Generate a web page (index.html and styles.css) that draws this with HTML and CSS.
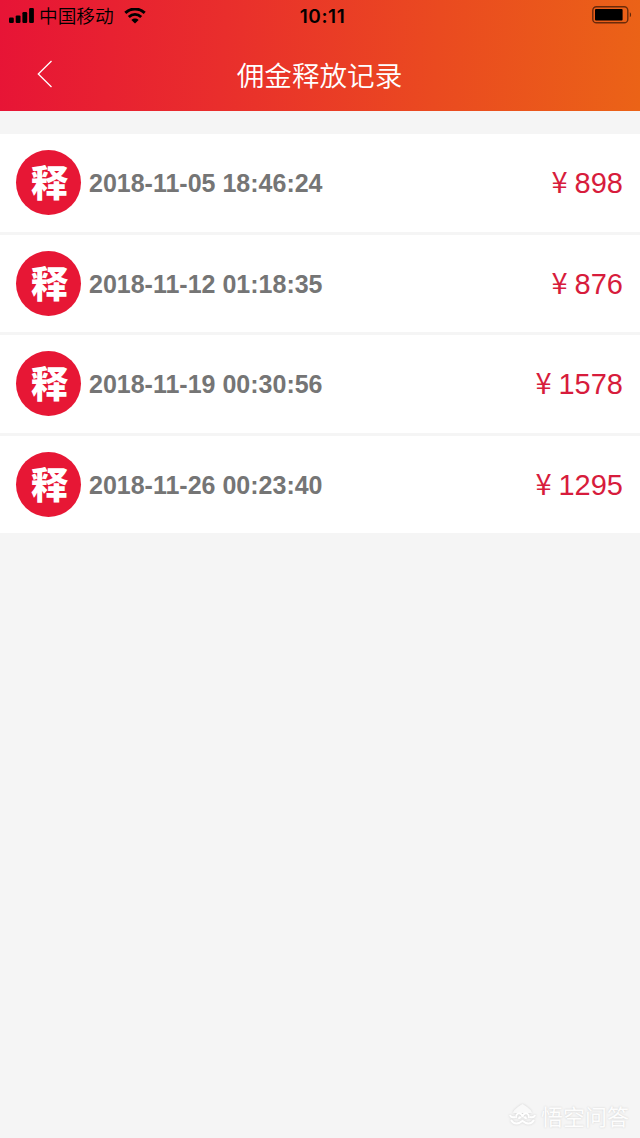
FILE: index.html
```
<!DOCTYPE html>
<html lang="zh-CN">
<head>
    <meta charset="UTF-8">
    <meta name="viewport" content="width=device-width, initial-scale=1.0">
    <title>佣金释放记录</title>
    <link rel="stylesheet" href="styles.css">
</head>
<body>
    <!-- Header -->
    <header class="header">
        <div class="status-bar">
            <div class="status-left">
                <svg class="signal" width="25" height="16" viewBox="0 0 25 16">
                    <rect x="0" y="9.6" width="4.8" height="5.4" rx="1.2"/>
                    <rect x="6.7" y="7.4" width="4.8" height="7.6" rx="1.2"/>
                    <rect x="13.4" y="4" width="4.8" height="11" rx="1.2"/>
                    <rect x="20.1" y="0" width="4.8" height="15" rx="1.2"/>
                </svg>
                <span class="carrier">中国移动</span>
                <svg class="wifi" width="22" height="16" viewBox="0 0 22 16">
                    <path d="M1.3 4.8C6.8 -0.2 15.2 -0.2 20.7 4.8" fill="none" stroke="#000" stroke-width="3"/>
                    <path d="M4.8 9C8.5 5.6 13.5 5.6 17.2 9" fill="none" stroke="#000" stroke-width="2.9"/>
                    <path d="M7.4 11.9C9.5 10 12.5 10 14.6 11.9L11 15.4Z"/>
                </svg>
            </div>
            <span class="clock">10:11</span>
            <div class="status-right">
                <svg class="battery" width="40" height="18" viewBox="0 0 40 18">
                    <rect x="0.8" y="0.8" width="35" height="16" rx="3.6" fill="none" stroke="#000" stroke-opacity="0.55" stroke-width="1.4"/>
                    <rect x="3" y="3" width="27.6" height="11.6" rx="1"/>
                    <path d="M37.8 6.3C39.5 7 39.5 10.4 37.8 11.2Z" fill-opacity="0.6"/>
                </svg>
            </div>
        </div>
        <div class="title-bar">
            <a class="back" href="#">
                <svg width="16" height="28" viewBox="0 0 16 28">
                    <path d="M14.5 1L1.3 14L14.5 27" fill="none" stroke="#fff" stroke-width="1.3"/>
                </svg>
            </a>
            <h1 class="title">佣金释放记录</h1>
            <span class="spacer"></span>
        </div>
    </header>

    <!-- Records -->
    <ul class="record-list">
        <li class="record">
            <span class="badge">释</span>
            <span class="date">2018-11-05 18:46:24</span>
            <span class="amount"><span class="yen">¥</span>898</span>
        </li>
        <li class="record">
            <span class="badge">释</span>
            <span class="date">2018-11-12 01:18:35</span>
            <span class="amount"><span class="yen">¥</span>876</span>
        </li>
        <li class="record">
            <span class="badge">释</span>
            <span class="date">2018-11-19 00:30:56</span>
            <span class="amount"><span class="yen">¥</span>1578</span>
        </li>
        <li class="record">
            <span class="badge">释</span>
            <span class="date">2018-11-26 00:23:40</span>
            <span class="amount"><span class="yen">¥</span>1295</span>
        </li>
    </ul>

    <!-- Watermark -->
    <footer class="watermark">
        <svg width="27" height="24" viewBox="0 0 27 24">
            <path d="M4 10C5 6 9 4 13.5 1C18 4 22 6 23 10Z" fill="#f9f9f9"/>
            <path d="M1 12Q2 15 6 14M26 12Q25 15 21 14M2 17Q5 22 10 20L13.5 18L17 20Q22 22 25 17" fill="none" stroke="#fff" stroke-width="2"/>
            <path d="M7 15C7 9 12.500 9 13.500 14C14.500 9 20 9 20 15M10 16Q10 13 12 15M17 16Q17 13 15 15" fill="none" stroke="#fff" stroke-width="1.8"/>
        </svg>
        <span>悟空问答</span>
    </footer>
</body>
</html>
```
FILE: styles.css
```
* {
    box-sizing: border-box;
}

body {
    font-family: "Liberation Sans", "Noto Sans CJK SC", sans-serif;
    background-color: #f5f5f5;
    margin: 0;
    min-height: 1138px;
    display: flex;
    flex-direction: column;
}

/* Header */
.header {
    height: 111px;
    background: linear-gradient(94deg, #e71436 0%, #e92e2c 35%, #ea4a20 68%, #eb6317 100%);
}

.status-bar {
    display: flex;
    align-items: center;
    height: 32px;
    padding: 0 8px 0 9px;
}

.status-left,
.status-right {
    display: flex;
    align-items: center;
    flex: 1;
}

.status-right {
    justify-content: flex-end;
}

.battery {
    margin-bottom: 2px;
}

.carrier {
    font-family: "Noto Sans CJK SC", sans-serif;
    font-size: 18.7px;
    font-weight: 350;
    line-height: 32px;
    margin: -2px 10px 0 5px;
}

.clock {
    font-family: Inter, sans-serif;
    font-size: 19px;
    font-weight: 600;
    line-height: 32px;
    letter-spacing: 0.6px;
    margin-left: 4px;
    padding-top: 1px;
}

.title-bar {
    display: flex;
    align-items: center;
    justify-content: space-between;
    height: 84px;
    padding: 0 38px 0 37px;
}

.back,
.spacer {
    display: flex;
    width: 40px;
}

.title {
    margin: 0;
    font-family: "Noto Sans CJK SC", sans-serif;
    font-size: 27.6px;
    font-weight: 350;
    color: #fff;
}

/* Record list */
.record-list {
    list-style: none;
    display: flex;
    flex-direction: column;
    gap: 3px;
    margin: 23px 0 0;
    padding: 0;
}

.record {
    display: flex;
    align-items: center;
    height: 97.5px;
    padding: 0 17px 0 16px;
    background-color: #fff;
}

.badge {
    width: 65px;
    height: 65px;
    border-radius: 50%;
    background-color: #e71735;
    color: #fff;
    font-family: "Noto Sans CJK SC", sans-serif;
    font-size: 37px;
    font-weight: 900;
    line-height: 62px;
    padding-left: 2px;
    text-align: center;
}

.date {
    flex: 1;
    margin-left: 8px;
    padding-top: 2px;
    font-size: 25px;
    font-weight: bold;
    color: #757575;
}

.amount {
    font-size: 29px;
    line-height: 34px;
    padding-top: 1px;
    color: #d71c3c;
}

.yen {
    font-family: "Noto Sans CJK SC", sans-serif;
    line-height: 1;
    margin-right: 7px;
}

/* Watermark */
.watermark {
    display: flex;
    align-items: center;
    justify-content: flex-end;
    gap: 5px;
    margin-top: auto;
    padding: 0 11px 8px 0;
    font-family: "Noto Sans CJK SC", sans-serif;
    font-size: 22px;
    line-height: 30px;
    color: #fdfdfd;
    text-shadow: 0 0 2px #ccc;
}

.watermark svg {
    filter: drop-shadow(0 0 1px #d0d0d0);
}
```
